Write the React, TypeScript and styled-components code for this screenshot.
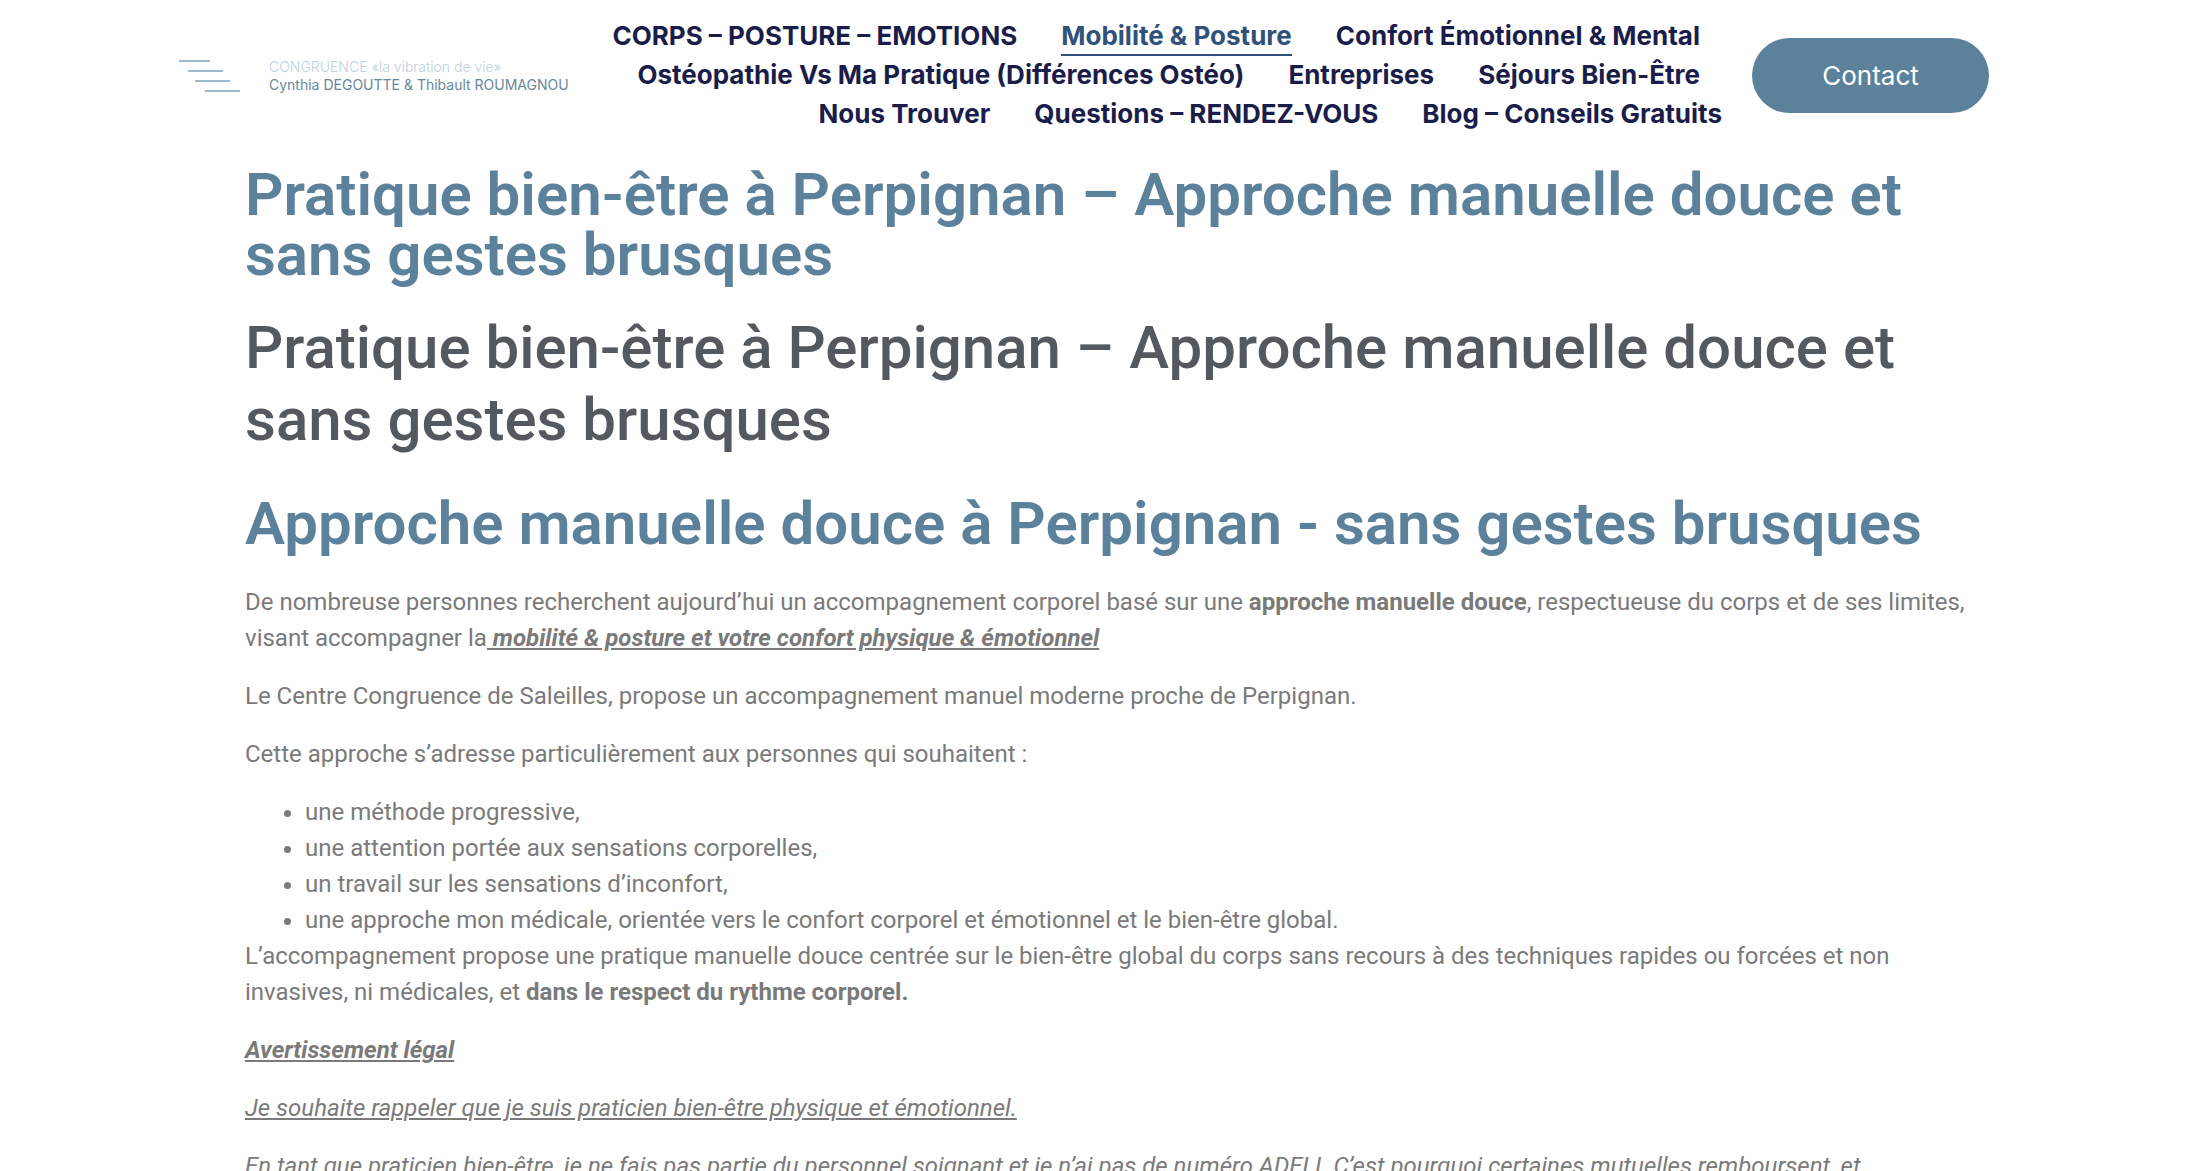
import React from "react";
import styled, { createGlobalStyle } from "styled-components";

const colors = {
  blue: "#5c819b",
  navy: "#1a1d4a",
  active: "#30517a",
  slate: "#54595f",
  text: "#7a7a7a",
  page: "#fefefe",
};

const GlobalStyle = createGlobalStyle`
  *, *::before, *::after { box-sizing: border-box; }
  body {
    margin: 0;
    background: ${colors.page};
    color: ${colors.text};
    font-family: Roboto, "Liberation Sans", sans-serif;
    font-size: 24px;
    line-height: 36px;
  }
`;

const Header = styled.header`
  display: flex;
  align-items: center;
  max-width: 1842px;
  margin: 0 auto;
  padding: 17px 32px 15px 0;
  font-family: Inter, "Liberation Sans", sans-serif;
`;

const Logo = styled.a`
  display: flex;
  align-items: center;
  gap: 28px;
  flex: none;
  text-decoration: none;
`;

const LogoMark = styled.svg`
  width: 62px;
  height: 34px;
  flex: none;
`;

const LogoText = styled.span`
  display: flex;
  flex-direction: column;
  font-size: 14px;
  line-height: 18px;
  white-space: nowrap;
`;

const LogoTitle = styled.span`
  color: #bdd0dd;
  font-weight: 300;
`;

const LogoNames = styled.span`
  color: #6a869b;
`;

const Nav = styled.nav`
  flex: 1;
  margin-right: 30px;
`;

const Menu = styled.ul`
  display: flex;
  flex-wrap: wrap;
  justify-content: flex-end;
  margin: 0;
  padding: 0;
  list-style: none;
`;

const MenuItem = styled.li`
  margin: 0 22px;
  &:first-child {
    margin-left: 0;
  }
  &:last-child {
    margin-right: 0;
  }
`;

const MenuLink = styled.a<{ $active?: boolean }>`
  display: block;
  border-bottom: 2px solid ${(p) => (p.$active ? colors.active : "transparent")};
  color: ${(p) => (p.$active ? colors.active : colors.navy)};
  font-size: 26px;
  font-weight: 700;
  line-height: 37px;
  text-decoration: none;
  white-space: nowrap;
`;

const ContactButton = styled.a`
  flex: none;
  width: 237px;
  padding: 19px 0;
  border-radius: 38px;
  background: ${colors.blue};
  color: #fff;
  font-size: 26px;
  line-height: 37px;
  text-align: center;
  text-decoration: none;
`;

const Main = styled.main`
  max-width: 1710px;
  margin: 0 auto;
  padding-top: 16px;
`;

const Title = styled.h1`
  margin: 0;
  color: ${colors.blue};
  font-size: 60px;
  font-weight: 600;
  line-height: 60px;
`;

const Subtitle = styled.h2`
  margin: 27px 0 38px;
  color: ${colors.slate};
  font-size: 60px;
  font-weight: 500;
  line-height: 72px;
`;

const Article = styled.article`
  margin-right: -16px;
  padding-top: 30px;
`;

const Paragraph = styled.p`
  margin: 0 0 22px;
`;

const List = styled.ul`
  margin: 0;
  padding-left: 60px;
`;

const Underlined = styled.u`
  font-style: italic;
`;

const links = [
  { label: "CORPS – POSTURE – EMOTIONS" },
  { label: "Mobilité & Posture", active: true },
  { label: "Confort Émotionnel & Mental" },
  { label: "Ostéopathie Vs Ma Pratique (Différences Ostéo)" },
  { label: "Entreprises" },
  { label: "Séjours Bien-Être" },
  { label: "Nous Trouver" },
  { label: "Questions – RENDEZ-VOUS" },
  { label: "Blog – Conseils Gratuits" },
];

export default function App() {
  return (
    <>
      <GlobalStyle />
      <Header>
        <Logo href="#">
          <LogoMark viewBox="0 0 62 34" stroke="#9dbace" strokeWidth="2" aria-hidden="true">
            <path d="M0 2H31M9 12H44M16 22H51M26 32H61" />
          </LogoMark>
          <LogoText>
            <LogoTitle>CONGRUENCE «la vibration de vie»</LogoTitle>
            <LogoNames>Cynthia DEGOUTTE &amp; Thibault ROUMAGNOU</LogoNames>
          </LogoText>
        </Logo>
        <Nav aria-label="Menu principal">
          <Menu>
            {links.map(({ label, active }) => (
              <MenuItem key={label}>
                <MenuLink href="#" $active={active}>
                  {label}
                </MenuLink>
              </MenuItem>
            ))}
          </Menu>
        </Nav>
        <ContactButton href="#">Contact</ContactButton>
      </Header>
      <Main>
        <Title>Pratique bien-être à Perpignan – Approche manuelle douce et sans gestes brusques</Title>
        <Subtitle>Pratique bien-être à Perpignan – Approche manuelle douce et sans gestes brusques</Subtitle>
        <Title as="h2">Approche manuelle douce à Perpignan - sans gestes brusques</Title>
        <Article>
          <Paragraph>
            De nombreuse personnes recherchent aujourd’hui un accompagnement corporel basé sur une{" "}
            <strong>approche manuelle douce</strong>, respectueuse du corps et de ses limites, visant
            accompagner la
            <Underlined>
              <strong> mobilité &amp; posture et votre confort physique &amp; émotionnel</strong>
            </Underlined>
          </Paragraph>
          <Paragraph>
            Le Centre Congruence de Saleilles, propose un accompagnement manuel moderne proche de
            Perpignan.
          </Paragraph>
          <Paragraph>Cette approche s’adresse particulièrement aux personnes qui souhaitent :</Paragraph>
          <List>
            <li>une méthode progressive,</li>
            <li>une attention portée aux sensations corporelles,</li>
            <li>un travail sur les sensations d’inconfort,</li>
            <li>
              une approche mon médicale, orientée vers le confort corporel et émotionnel et le bien-être
              global.
            </li>
          </List>
          <Paragraph>
            L’accompagnement propose une pratique manuelle douce centrée sur le bien-être global du corps
            sans recours à des techniques rapides ou forcées et non invasives, ni médicales, et{" "}
            <strong>dans le respect du rythme corporel.</strong>
          </Paragraph>
          <Paragraph>
            <Underlined>
              <strong>Avertissement légal</strong>
            </Underlined>
          </Paragraph>
          <Paragraph>
            <Underlined>Je souhaite rappeler que je suis praticien bien-être physique et émotionnel.</Underlined>
          </Paragraph>
          <Paragraph>
            <em>
              En tant que praticien bien-être, je ne fais pas partie du personnel soignant et je n’ai pas de
              numéro ADELI. C’est pourquoi certaines mutuelles remboursent, et
            </em>
          </Paragraph>
        </Article>
      </Main>
    </>
  );
}
